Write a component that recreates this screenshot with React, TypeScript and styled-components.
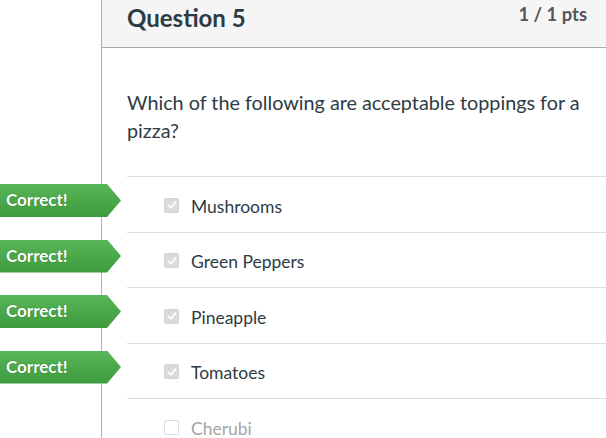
import React from "react";
import styled, { createGlobalStyle } from "styled-components";

const Global = createGlobalStyle`
  html, body { margin: 0; padding: 0; background: #fff; }
  body { font-family: Lato, "Open Sans", "Liberation Sans", sans-serif; color: #2d3b45; overflow: hidden; }
  * { box-sizing: border-box; }
`;

const Page = styled.div`
  display: flex;
  width: 606px;
  height: 438px;
  overflow: hidden;
`;

const Gutter = styled.div`
  width: 101px;
  flex: none;
`;

const Panel = styled.div`
  flex: 1;
  border-left: 1px solid #b0b0b0;
  min-width: 0;
`;

const Header = styled.div`
  height: 48px;
  background: #f5f5f5;
  border-bottom: 1px solid #a8a8a8;
  display: flex;
  justify-content: space-between;
  align-items: flex-start;
  padding: 0 19px 0 25px;
`;

const Title = styled.h2`
  margin: 0;
  padding-top: 4px;
  font-size: 24px;
  font-weight: 700;
  line-height: 28px;
  color: #2d3b45;
`;

const Points = styled.div`
  padding-top: 3px;
  font-size: 18.4px;
  font-weight: 700;
  line-height: 22px;
  color: #555;
`;

const Body = styled.div`
  padding: 40px 0 0 25px;
`;

const QuestionText = styled.p`
  margin: 0 0 32px;
  font-size: 19.8px;
  line-height: 28px;
  color: #2d3b45;
  padding-right: 12px;
`;

const List = styled.div`
  display: flex;
  flex-direction: column;
`;

const Row = styled.div<{ $muted?: boolean }>`
  position: relative;
  height: 55.5px;
  border-top: 1px solid #dcdcdc;
  display: flex;
  align-items: center;
  padding: 5px 0 0 37px;
  gap: 12px;
  font-size: 17.5px;
  color: ${(p) => (p.$muted ? "#a5a5a5" : "#2d3b45")};
`;

const Box = styled.span<{ $checked?: boolean }>`
  width: 15px;
  height: 15px;
  border-radius: 2px;
  flex: none;
  display: flex;
  align-items: center;
  justify-content: center;
  background: ${(p) => (p.$checked ? "#dadada" : "#fff")};
  border: 1px solid ${(p) => (p.$checked ? "#d4d4d4" : "#dedede")};
  margin-top: -3px;
`;

const Label = styled.span`
  line-height: 20px;
`;

const Badge = styled.div`
  position: absolute;
  top: 7px;
  left: -127px;
  width: 121px;
  height: 33px;
  display: flex;
  align-items: center;
  padding-left: 6px;
  padding-bottom: 2px;
  font-size: 17px;
  font-weight: 700;
  color: #fff;
  text-shadow: 0 0 1px rgba(0, 60, 0, 0.6);
  background: linear-gradient(#58b758, #3d9a3d);
  clip-path: polygon(0 0, 107px 0, 121px 50%, 107px 100%, 0 100%);
`;

const Check = () => (
  <svg width="10" height="10" viewBox="0 0 10 10">
    <path d="M1.5 5.3 L4 7.6 L8.6 2.2" fill="none" stroke="#fff" strokeWidth="1.8" strokeLinecap="round" strokeLinejoin="round" />
  </svg>
);

const answers = [
  { text: "Mushrooms", checked: true },
  { text: "Green Peppers", checked: true },
  { text: "Pineapple", checked: true },
  { text: "Tomatoes", checked: true },
  { text: "Cherubi", checked: false },
];

export default function App() {
  return (
    <>
      <Global />
      <Page>
        <Gutter />
        <Panel>
          <Header>
            <Title>Question 5</Title>
            <Points>1 / 1 pts</Points>
          </Header>
          <Body>
            <QuestionText>Which of the following are acceptable toppings for a pizza?</QuestionText>
            <List>
              {answers.map((a) => (
                <Row key={a.text} $muted={!a.checked}>
                  {a.checked && <Badge>Correct!</Badge>}
                  <Box $checked={a.checked}>{a.checked && <Check />}</Box>
                  <Label>{a.text}</Label>
                </Row>
              ))}
            </List>
          </Body>
        </Panel>
      </Page>
    </>
  );
}
